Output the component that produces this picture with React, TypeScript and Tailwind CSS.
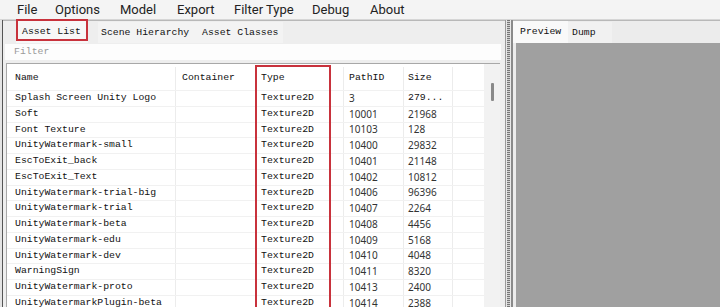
import React from "react";

const rows: [string, string, string, string][] = [
  ["Splash Screen Unity Logo", "Texture2D", "3", "279..."],
  ["Soft", "Texture2D", "10001", "21968"],
  ["Font Texture", "Texture2D", "10103", "128"],
  ["UnityWatermark-small", "Texture2D", "10400", "29832"],
  ["EscToExit_back", "Texture2D", "10401", "21148"],
  ["EscToExit_Text", "Texture2D", "10402", "10812"],
  ["UnityWatermark-trial-big", "Texture2D", "10406", "96396"],
  ["UnityWatermark-trial", "Texture2D", "10407", "2264"],
  ["UnityWatermark-beta", "Texture2D", "10408", "4456"],
  ["UnityWatermark-edu", "Texture2D", "10409", "5168"],
  ["UnityWatermark-dev", "Texture2D", "10410", "4048"],
  ["WarningSign", "Texture2D", "10411", "8320"],
  ["UnityWatermark-proto", "Texture2D", "10413", "2400"],
  ["UnityWatermarkPlugin-beta", "Texture2D", "10414", "2388"],
];

const mono = "font-['Liberation_Mono',monospace] text-[9.8px] text-[#111]";
const num = "font-['Noto_Sans',sans-serif] text-[10px] text-[#333]";

export default function App() {
  const menu: [string, string][] = [
    ["File", "w-[38px]"],
    ["Options", "w-[65px]"],
    ["Model", "w-[57px]"],
    ["Export", "w-[57px]"],
    ["Filter Type", "w-[78px]"],
    ["Debug", "w-[58px]"],
    ["About", "w-[60px]"],
  ];
  return (
    <div className="w-[720px] h-[307px] overflow-hidden bg-[#f0f0f0] flex flex-col">
      {/* menu */}
      <div className="h-[20px] shrink-0 flex items-center pl-[17px] bg-[#f4f4f4] border-b border-[#d6d6d6] font-['Roboto',sans-serif] text-[13px] text-[#222] leading-none pb-[1px]">
        {menu.map(([t, w]) => (
          <div key={t} className={w}>
            {t}
          </div>
        ))}
      </div>
      <div className="flex flex-1 min-h-0">
        {/* left panel */}
        <div className="w-[505px] shrink-0 flex">
          <div className="w-[2px] bg-[#e4e4e4]" />
          <div className="w-[1px] bg-[#555]" />
          <div className="flex-1 flex flex-col border-t border-[#b8b8b8] bg-[#eeeeee]">
            {/* tabs */}
            <div className={`h-[22px] shrink-0 flex items-stretch pl-[13px] ${mono}`}>
              <div className="w-[72px] relative flex items-center pl-[6px] bg-[#f7f7f7]">
                Asset List
                <div className="absolute left-0 right-0 top-[-2px] bottom-[2px] border-2 border-[#c8323c]" />
              </div>
              <div className="w-[10px]" />
              <div className="w-[100px] flex items-center pl-[3px] bg-[#f3f3f3] mt-[1px] pt-[1px]">Scene Hierarchy</div>
              <div className="w-[85px] flex items-center pl-[4px] bg-[#f3f3f3] mt-[1px] pt-[1px]">Asset Classes</div>
            </div>
            {/* filter */}
            <div className="h-[16px] shrink-0 mt-[1px] mx-[2px] mr-[4px] bg-[#fdfdfd] flex items-center pl-[9px] font-['Liberation_Mono',monospace] text-[9.8px] text-[#9a9a9a]">
              Filter
            </div>
            <div className="h-[3px] shrink-0" />
            {/* table */}
            <div className="flex-1 ml-[3px] mr-[5px] bg-white border-t border-l border-[#a8a8a8] flex relative">
              <div className="flex-1 flex flex-col">
                <div className={`h-[26px] shrink-0 flex items-stretch pt-[3px] ${mono}`}>
                  <div className="w-[169px] pl-[8px] flex items-center border-r border-[#ececec]">Name</div>
                  <div className="w-[80px] pl-[6px] flex items-center border-r border-[#ececec]">Container</div>
                  <div className="w-[88px] pl-[5px] flex items-center border-r border-[#ececec]">Type</div>
                  <div className="w-[60px] pl-[5px] flex items-center border-r border-[#ececec]">PathID</div>
                  <div className="w-[49px] pl-[4px] flex items-center border-r border-[#ececec]">Size</div>
                </div>
                {rows.map((r) => (
                  <div key={r[2]} className="h-[15.75px] shrink-0 flex items-stretch border-t border-[#f1f1f1]">
                    <div className={`w-[169px] pl-[8px] flex items-center border-r border-[#ececec] ${mono}`}>{r[0]}</div>
                    <div className="w-[80px] border-r border-[#ececec]" />
                    <div className={`w-[88px] pl-[5px] flex items-center border-r border-[#ececec] ${mono}`}>{r[1]}</div>
                    <div className={`w-[60px] pl-[5px] flex items-center border-r border-[#ececec] ${num}`}>{r[2]}</div>
                    <div className={`w-[49px] pl-[4px] flex items-center border-r border-[#ececec] ${r[3] === "279..." ? mono : num}`}>{r[3]}</div>
                  </div>
                ))}
              </div>
              {/* scrollbar */}
              <div className="w-[16px] bg-[#f2f2f2] flex justify-center pt-[19px]">
                <div className="w-[3px] h-[18px] bg-[#8a8a8a] rounded-[1px]" />
              </div>
              {/* highlight */}
              <div className="absolute left-[248px] w-[76px] top-[1px] bottom-0 border-2 border-b-0 border-[#c8323c]" />
            </div>
          </div>
        </div>
        {/* splitter */}
        <div className="w-[8px] shrink-0 flex bg-[#dcdcdc]">
          <div className="w-[1px] bg-[#9a9a9a]" />
          <div className="w-[1px] bg-[#e8e8e8]" />
          <div className="w-[3px] bg-[repeating-linear-gradient(0deg,#777_0px,#777_1px,#d0d0d0_1px,#d0d0d0_2px)]" />
          <div className="w-[1px] bg-[#e8e8e8]" />
          <div className="w-[2px] bg-[#8a8a8a]" />
        </div>
        {/* right panel */}
        <div className="flex-1 flex flex-col border-t border-[#b8b8b8] bg-[#ececec]">
          <div className={`h-[22px] shrink-0 flex items-stretch ${mono}`}>
            <div className="w-[55px] bg-[#f9f9f9] flex items-center pl-[7px]">Preview</div>
            <div className="w-[44px] bg-[#f1f1f1] flex items-center pl-[4px] mt-[1px] pt-[2px]">Dump</div>
          </div>
          <div className="flex-1 ml-[3px] bg-[#a0a0a0]" />
        </div>
      </div>
    </div>
  );
}
